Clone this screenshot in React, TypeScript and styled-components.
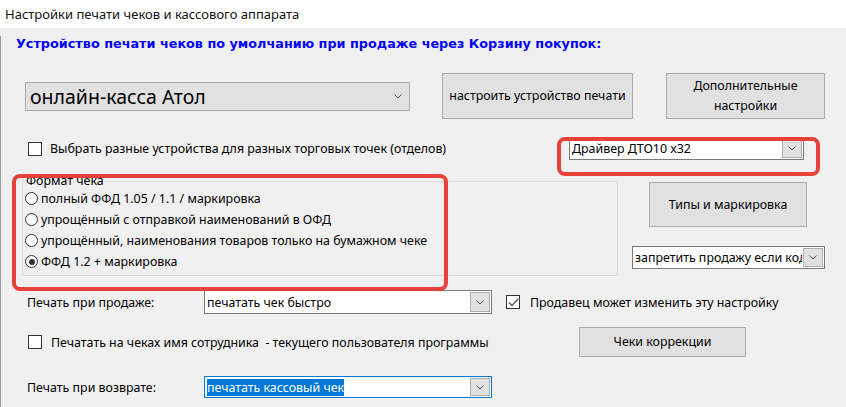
import React, { FC } from "react";
import styled, { createGlobalStyle } from "styled-components";

const GlobalStyle = createGlobalStyle`
  body {
    margin: 0;
    background: #f0f0f0;
    font-family: "Noto Sans", "Liberation Sans", sans-serif;
    font-size: 12.4px;
    color: #000;
  }
`;

const Window = styled.div`
  width: 846px;
  height: 407px;
  overflow: hidden;
  background: #f0f0f0;
`;

const TitleBar = styled.div`
  height: 28px;
  background: #fff;
  padding-left: 5px;
  display: flex;
  align-items: center;
  font-size: 13px;
  color: #111;
`;

const Body = styled.div`
  position: relative;
  height: 379px;
  border-left: 1px solid #9a9a9a;
  box-sizing: border-box;
`;

const Heading = styled.div`
  margin: 8px 0 0 15px;
  height: 16px;
  line-height: 16px;
  font-family: "DejaVu Sans", sans-serif;
  font-weight: bold;
  font-size: 12.8px;
  color: #0000ff;
  white-space: nowrap;
`;

const Row = styled.div<{ $gap: number; $height: number }>`
  margin-top: ${({ $gap }) => $gap}px;
  height: ${({ $height }) => $height}px;
  display: flex;
  align-items: center;
`;

const Cell = styled.div<{ $left?: number; $width?: number }>`
  margin-left: ${({ $left = 0 }) => $left}px;
  width: ${({ $width }) => ($width ? `${$width}px` : "auto")};
  flex-shrink: 0;
  display: flex;
  align-items: center;
`;

const Button = styled.button<{ $width: number; $height: number }>`
  width: ${({ $width }) => $width}px;
  height: ${({ $height }) => $height}px;
  background: #e1e1e1;
  border: 1px solid #adadad;
  font-family: inherit;
  font-size: 12.4px;
  line-height: 20px;
  color: #000;
  padding: 0;
  text-align: center;
`;

const Combo = styled.div<{ $width: number; $height: number; $focused?: boolean; $top?: number }>`
  width: ${({ $width }) => $width}px;
  height: ${({ $height }) => $height}px;
  margin-top: ${({ $top = 0 }) => $top}px;
  box-sizing: border-box;
  background: #fff;
  border: 1px solid ${({ $focused }) => ($focused ? "#0078d7" : "#7a7a7a")};
  display: flex;
  align-items: stretch;
  overflow: hidden;
`;

const ComboText = styled.div`
  flex: 1;
  min-width: 0;
  padding-left: 2px;
  display: flex;
  align-items: center;
  white-space: nowrap;
  overflow: hidden;
`;

const Selected = styled.span`
  background: #0078d7;
  color: #fff;
  line-height: 17px;
`;

const DropButton = styled.div`
  width: 20px;
  margin: 1px;
  box-sizing: border-box;
  background: #e1e1e1;
  border: 1px solid #adadad;
  display: flex;
  align-items: center;
  justify-content: center;
  flex-shrink: 0;
`;

const FlatCombo = styled.div`
  width: 385px;
  height: 29px;
  box-sizing: border-box;
  background: #e1e1e1;
  border: 1px solid #adadad;
  display: flex;
  align-items: center;
  padding: 0 7px 0 4px;
  font-size: 19.5px;
`;

const FlatText = styled.div`
  flex: 1;
  white-space: nowrap;
`;

const Box = styled.span<{ $size: number }>`
  width: ${({ $size }) => $size}px;
  height: ${({ $size }) => $size}px;
  box-sizing: border-box;
  border: 1px solid #333;
  background: #fff;
  display: inline-flex;
  align-items: center;
  justify-content: center;
  flex-shrink: 0;
`;

const RadioCircle = styled(Box)`
  border-radius: 50%;
`;

const Dot = styled.span`
  width: 6px;
  height: 6px;
  border-radius: 50%;
  background: #333;
`;

const Label = styled.span<{ $gap?: number }>`
  margin-left: ${({ $gap = 0 }) => $gap}px;
  white-space: pre;
`;

const GroupBox = styled.fieldset`
  margin: 0 0 0 21px;
  padding: 0 0 0 2px;
  width: 596px;
  height: 102px;
  box-sizing: border-box;
  border: 1px solid #dcdcdc;
  display: flex;
  flex-direction: column;
  flex-shrink: 0;
`;

const Legend = styled.legend`
  padding: 0;
  margin-left: 1px;
  line-height: 14px;
`;

const RadioRow = styled.div`
  height: 21px;
  display: flex;
  align-items: center;
  white-space: nowrap;
`;

const RightColumn = styled.div`
  align-self: flex-start;
  margin-top: 8px;
  display: flex;
  flex-direction: column;
`;

// red annotation frames drawn over the form
const Highlight = styled.div<{ $x: number; $y: number; $w: number; $h: number }>`
  position: absolute;
  left: ${({ $x }) => $x}px;
  top: ${({ $y }) => $y}px;
  width: ${({ $w }) => $w}px;
  height: ${({ $h }) => $h}px;
  box-sizing: border-box;
  border: 4px solid #e8413a;
  border-radius: 8px;
  pointer-events: none;
`;

const Chevron: FC = () => (
  <svg width="8" height="5" viewBox="0 0 8 5">
    <polyline points="0.5,0.5 4,4 7.5,0.5" fill="none" stroke="#555" strokeWidth="1" />
  </svg>
);

const Tick: FC = () => (
  <svg width="11" height="9" viewBox="0 0 11 9">
    <polyline points="1,4.5 4,7.5 10,1" fill="none" stroke="#555" strokeWidth="1.4" />
  </svg>
);

type CheckProps = { text: string; checked?: boolean; gap: number };

const Check: FC<CheckProps> = ({ text, checked, gap }) => (
  <>
    <Box $size={14}>{checked && <Tick />}</Box>
    <Label $gap={gap}>{text}</Label>
  </>
);

type DropdownProps = {
  width: number;
  height: number;
  focused?: boolean;
  top?: number;
  children: React.ReactNode;
};

const Dropdown: FC<DropdownProps> = ({ width, height, focused, top, children }) => (
  <Combo $width={width} $height={height} $focused={focused} $top={top}>
    <ComboText>{children}</ComboText>
    <DropButton>
      <Chevron />
    </DropButton>
  </Combo>
);

type Option = { text: string; checked?: boolean };

const formats: Option[] = [
  { text: "полный ФФД 1.05 / 1.1 / маркировка" },
  { text: "упрощённый с отправкой наименований в ОФД" },
  { text: "упрощённый, наименования товаров только на бумажном чеке" },
  { text: "ФФД 1.2 + маркировка", checked: true },
];

const App: FC = () => (
  <Window>
    <GlobalStyle />
    <TitleBar>Настройки печати чеков и кассового аппарата</TitleBar>
    <Body>
      <Heading>Устройство печати чеков по умолчанию при продаже через Корзину покупок:</Heading>

      <Row $gap={21} $height={46}>
        <Cell $left={24}>
          <FlatCombo>
            <FlatText>онлайн-касса Атол</FlatText>
            <Chevron />
          </FlatCombo>
        </Cell>
        <Cell $left={32}>
          <Button $width={191} $height={46}>настроить устройство печати</Button>
        </Cell>
        <Cell $left={33}>
          <Button $width={159} $height={46}>
            Дополнительные
            <br />
            настройки
          </Button>
        </Cell>
      </Row>

      <Row $gap={18} $height={23}>
        <Cell $left={27} $width={541}>
          <Check text="Выбрать разные устройства для разных торговых точек (отделов)" gap={8} />
        </Cell>
        <Dropdown width={235} height={23}>
          Драйвер ДТО10 x32
        </Dropdown>
      </Row>

      <Row $gap={14} $height={102}>
        <GroupBox>
          <Legend>Формат чека</Legend>
          {formats.map((f) => (
            <RadioRow key={f.text}>
              <RadioCircle $size={13}>{f.checked && <Dot />}</RadioCircle>
              <Label $gap={3}>{f.text}</Label>
            </RadioRow>
          ))}
        </GroupBox>
        <RightColumn>
          <Cell $left={31}>
            <Button $width={158} $height={45}>Типы и маркировка</Button>
          </Cell>
          <Cell $left={14}>
            <Dropdown width={193} height={23} top={19}>
              запретить продажу если код не прошёл проверку
            </Dropdown>
          </Cell>
        </RightColumn>
      </Row>

      <Row $gap={14} $height={24}>
        <Cell $left={26} $width={177}>
          <Label>Печать при продаже:</Label>
        </Cell>
        <Dropdown width={288} height={24}>
          печатать чек быстро
        </Dropdown>
        <Cell $left={14}>
          <Check text="Продавец может изменить эту настройку" checked gap={10} />
        </Cell>
      </Row>

      <Row $gap={13} $height={30}>
        <Cell $left={27} $width={551}>
          <Check text="Печатать на чеках имя сотрудника  - текущего пользователя программы" gap={9} />
        </Cell>
        <Button $width={167} $height={30}>Чеки коррекции</Button>
      </Row>

      <Row $gap={19} $height={22}>
        <Cell $left={26} $width={177}>
          <Label>Печать при возврате:</Label>
        </Cell>
        <Dropdown width={288} height={22} focused>
          <Selected>печатать кассовый чек</Selected>
        </Dropdown>
      </Row>

      <Highlight $x={556} $y={101} $w={263} $h={39} />
      <Highlight $x={11} $y={138} $w={436} $h={117} />
    </Body>
  </Window>
);

export default App;
